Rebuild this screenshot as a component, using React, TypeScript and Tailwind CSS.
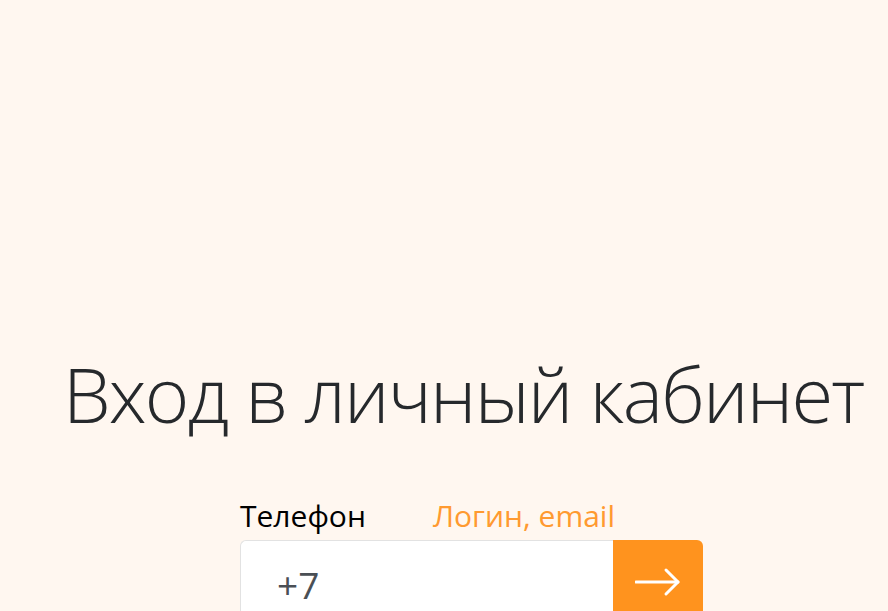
import React from "react";

export default function App() {
  return (
    <div className="min-h-screen w-full overflow-hidden bg-[#fff7f0] font-['Open_Sans','Noto_Sans',sans-serif]">
      <div className="pt-[356px] pl-[63px]">
        <h1 className="text-[76px] font-light leading-none tracking-[-1.8px] text-[#26292c] whitespace-nowrap">
          Вход в личный кабинет
        </h1>
      </div>
      <div className="ml-[240px] mt-[69px] w-[463px]">
        <div className="flex items-end gap-[67px] text-[30px] leading-none">
          <button className="text-black">Телефон</button>
          <button className="text-[#ff9a30]">Логин, email</button>
        </div>
        <div className="mt-[9px] flex h-[84px]">
          <div className="flex flex-1 items-start rounded-l-md border border-r-0 border-[#e2e2e2] bg-white pl-[36px] pt-[25px]">
            <span className="text-[37px] leading-none font-normal text-[#4a4f55]">+7</span>
          </div>
          <button className="flex w-[90px] items-center justify-center rounded-r-md bg-[#ff931e]">
            <svg width="46" height="30" viewBox="0 0 46 30" fill="none" stroke="white" strokeWidth="3" strokeLinecap="round" strokeLinejoin="round">
              <path d="M1 15H43" />
              <path d="M31 3L43 15L31 27" />
            </svg>
          </button>
        </div>
      </div>
    </div>
  );
}
